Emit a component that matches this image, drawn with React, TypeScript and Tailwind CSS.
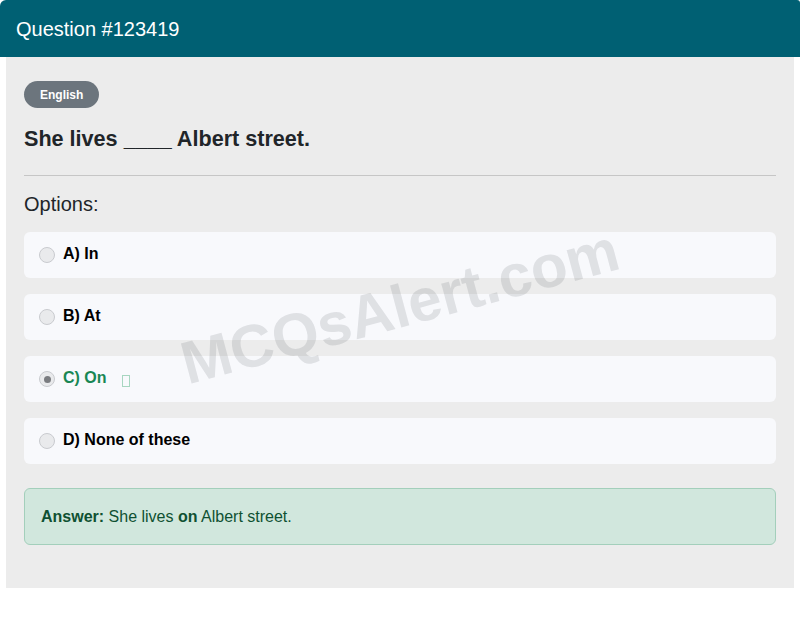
import React from "react";

function Radio({ checked }: { checked?: boolean }) {
  return (
    <span className="flex h-4 w-4 shrink-0 items-center justify-center rounded-full border border-[#c9cbcf] bg-[#e9eaec]">
      {checked && <span className="h-[7px] w-[7px] rounded-full bg-[#7a7c80]" />}
    </span>
  );
}

function Option({ label, checked }: { label: string; checked?: boolean }) {
  return (
    <div className="flex h-[46px] items-center gap-2 rounded-md bg-[#f8f9fc] px-[15px]">
      <Radio checked={checked} />
      <span className={`-mt-[2px] text-[16px] font-bold leading-5 ${checked ? "text-[#198754]" : "text-black"}`}>{label}</span>
      {checked && <span className="ml-[7px] mt-[3px] inline-block h-[12px] w-[8px] border border-[#a7d6c0]" />}
    </div>
  );
}

export default function App() {
  return (
    <div className="relative w-[800px] bg-white pb-[30px]" style={{ fontFamily: '"Liberation Sans", Arial, sans-serif' }}>
      <div className="flex h-[57px] items-center rounded-tl-[6px] rounded-tr-[3px] bg-[#006073] px-4 text-[20px] text-white">
        Question #123419
      </div>
      <div className="mx-[6px] bg-[#ececec] px-[18px] pb-[43px] pt-[24px]">
        <span className="inline-flex h-[27px] items-center rounded-full bg-[#6c757d] px-4 text-[12px] font-bold text-white">
          English
        </span>
        <div className="mt-[19px] text-[21.6px] font-bold leading-6 text-[#212529]">She lives ____ Albert street.</div>
        <div className="mt-[24px] h-px bg-[#c6c6c6]" />
        <div className="mt-[16px] text-[20px] leading-6 text-[#212529]">Options:</div>
        <div className="mt-[16px] flex flex-col gap-4">
          <Option label="A) In" />
          <Option label="B) At" />
          <Option label="C) On" checked />
          <Option label="D) None of these" />
        </div>
        <div className="mt-[24px] flex h-[57px] items-center rounded-md border border-[#a3cfbb] bg-[#d1e7dd] px-4 text-[16px] text-[#0f5132]">
          <span>
            <b>Answer:</b> She lives <b>on</b> Albert street.
          </span>
        </div>
      </div>
      <div className="pointer-events-none absolute left-0 top-0 flex h-[618px] w-[800px] items-center justify-center">
        <div className="-mt-[4px] -rotate-[15deg] whitespace-nowrap text-[60px] font-bold text-[rgba(80,85,95,0.15)]">
          MCQsAlert.com
        </div>
      </div>
    </div>
  );
}
